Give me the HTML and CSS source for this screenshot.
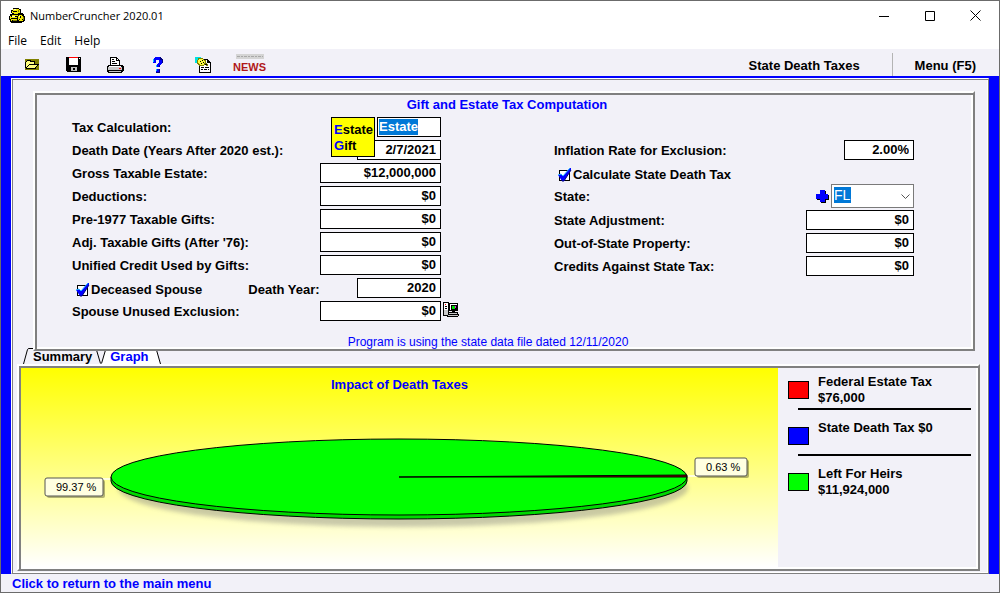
FILE: index.html
```html
<!DOCTYPE html>
<html lang="en">
<head>
	<meta charset="UTF-8">
	<title>NumberCruncher 2020.01</title>
	<link rel="stylesheet" href="styles.css">
</head>
<body>
	<div class="window">
		<header class="titlebar">
			<svg class="app-icon" width="17" height="16" viewBox="0 0 17 16" shape-rendering="crispEdges">
				<path d="M4 0h6v1h2v4h2v1h1v2h1v5h-1v1h-2v1H2v-1H1v-2H0V8h1V6h2V5H2V2h2z" fill="#000"/>
				<path d="M4 1h6v1h1v3H9v1H5V5H3V3h1zM3 7h6v1H2v1h6v1H2v1h6v1H3v1H2v-2H1V8h2zM10 7h3v1h1v5h-4v-1H9V8h1z" fill="#f0e800"/>
				<path d="M4 3h4v1H4zM11 8h1v2h-1zM10 11h1v1h-1zM13 11h1v1h-1z" fill="#000"/>
				<path d="M5 1h2v1H5zM3 8h3v1H3zM10 8h1v1h-1z" fill="#ffffc0"/>
				<path d="M9 2h1v2H9zM4 12h4v1H4zM14 9h1v3h-1z" fill="#808000"/>
			</svg>
			<h1>NumberCruncher 2020.01</h1>
			<div class="win-buttons">
				<button aria-label="Minimize"><svg width="10" height="11"><path d="M0 5.5h10" stroke="#000"/></svg></button>
				<button aria-label="Maximize"><svg width="11" height="11"><path d="M.5.5h9v9h-9z" fill="none" stroke="#000"/></svg></button>
				<button aria-label="Close"><svg width="12" height="12"><path d="M.5.5l10 10M10.500.5l-10 10" stroke="#000"/></svg></button>
			</div>
		</header>
		<nav class="menubar">
			<a href="#">File</a>
			<a href="#">Edit</a>
			<a href="#">Help</a>
		</nav>

		<div class="toolbar">
			<button aria-label="Open">
				<svg width="14" height="11" viewBox="0 0 14 11" shape-rendering="crispEdges">
					<path d="M0 0h14v11H0z" fill="#808000"/>
					<path d="M1 2h1V1h4v1h4v3h4v1h-1v1h-1v1h-1v2H1v-1H0V3h1z" fill="#000"/>
					<path d="M2 2h3v1h4v2H4v1H3v1H2v1H1V3h1zM4 6h8v1h-1v1h-1v1H2V8h1V7h1z" fill="#ffff80"/>
				</svg>
			</button>
			<button aria-label="Save">
				<svg width="16" height="15" viewBox="0 0 16 15" shape-rendering="crispEdges">
					<path d="M0 0h15v15H1v-1H0z" fill="#000"/>
					<path d="M3 1h9v7H3z" fill="#fff"/>
					<path d="M3 0h9v1H3z" fill="#f00"/>
					<path d="M13 1h1v1h-1z" fill="#fff"/>
					<path d="M5 10h6v4H5z" fill="#c0c0c0"/>
					<path d="M7 11h2v2H7z" fill="#000"/>
				</svg>
			</button>
			<button aria-label="Print">
				<svg width="18" height="16" viewBox="0 0 18 16" shape-rendering="crispEdges">
					<path d="M3 0h7v1h1v1h1v1h1v5h3v1h1v5h-1v1h-1v1H1v-1H0V9h1V8h2z" fill="#000"/>
					<path d="M4 1h5v3h3v4H4zM2 9h12v1H2z" fill="#fff"/>
					<path d="M1 10h14v3H1zM2 14h12v1H2z" fill="#c8c8c8"/>
					<path d="M5 2h2v1H5zM5 4h3v1H5zM5 6h5v1H5z" fill="#000"/>
					<path d="M10 2h1v1h-1z" fill="#fff"/>
					<path d="M12 11h2v1h-2z" fill="#f00"/>
				</svg>
			</button>
			<button aria-label="Help">
				<svg width="12" height="16" viewBox="0 0 12 16" shape-rendering="crispEdges">
					<path d="M2 1h1V0h5v1h2v1h1v4h-1v1H9v1H8v2H4V8h1V7h1V6h1V3H4v3H1V2h1zM4 12h4v4H4z" fill="#00f"/>
					<path d="M8 0h1v1h1v1h1v4h-1V3H8zM7 8h1v2H7zM7 12h1v4H4v-1h3z" fill="#000080"/>
					<path d="M1 2h1v3H1zM4 8h1v2H4zM4 12h1v2H4z" fill="#00c0ff"/>
				</svg>
			</button>
			<button class="wide" aria-label="Find">
				<svg width="16" height="16" viewBox="0 0 16 16" shape-rendering="crispEdges">
					<path d="M4 2h9v1h1v1h1v1h1v11H4z" fill="#000"/>
					<path d="M5 3h7v3h3v9H5z" fill="#fff"/>
					<path d="M0 0h6v2H4v1H3v2H2v1H0z" fill="#00e0e0"/>
					<path d="M3 1h5v1h1v1h2v3h1v1h1v2h-2V8H9v1H4V8H3V7H2V3h1z" fill="#808000"/>
					<path d="M3 3h1V2h4v1h1v1h1v2H9v2H5V7H4V6H3z" fill="#ffff40"/>
					<path d="M5 4h1v1H5zM7 3h1v1H7zM6 6h1v1H6zM8 5h1v1H8zM10 7h2v1h-2zM6 10h3v1H6zM10 10h4v1h-4zM6 12h2v1H6zM9 12h3v1H9zM13 12h1v1h-1z" fill="#000"/>
				</svg>
			</button>
			<button class="wide news" aria-label="News">
				<svg width="28" height="5" viewBox="0 0 28 5" shape-rendering="crispEdges">
					<path d="M0 0h28v5H0z" fill="#d4d4d4"/>
					<path d="M1 2.500h26" stroke="#a8a8a8" stroke-dasharray="3 1 2 1"/>
				</svg>
				<span>NEWS</span>
			</button>
			<button class="text-btn state-btn">State Death Taxes</button>
			<button class="text-btn menu-btn">Menu (F5)</button>
		</div>

		<main class="workspace">
			<div class="panel">
				<form class="frame tax-form">
					<h2>Gift and Estate Tax Computation</h2>
					<div class="columns">
						<div class="col-left">
							<div class="row">
								<label for="calc">Tax Calculation:</label>
								<input id="calc" class="field calc" value="Estate">
								<div class="popup">
									<div><b>E</b>state</div>
									<div><b>G</b>ift</div>
								</div>
							</div>
							<div class="row">
								<label for="ddate">Death Date (Years After 2020 est.):</label>
								<input id="ddate" class="field short" value="2/7/2021">
							</div>
							<div class="row">
								<label for="gross">Gross Taxable Estate:</label>
								<input id="gross" class="field" value="$12,000,000">
							</div>
							<div class="row">
								<label for="deduct">Deductions:</label>
								<input id="deduct" class="field" value="$0">
							</div>
							<div class="row">
								<label for="pre77">Pre-1977 Taxable Gifts:</label>
								<input id="pre77" class="field" value="$0">
							</div>
							<div class="row">
								<label for="adj">Adj. Taxable Gifts (After '76):</label>
								<input id="adj" class="field" value="$0">
							</div>
							<div class="row">
								<label for="unified">Unified Credit Used by Gifts:</label>
								<input id="unified" class="field" value="$0">
							</div>
							<div class="row">
								<label class="check">
									<span class="box"><input type="checkbox" checked>
										<svg width="15" height="14" viewBox="0 0 15 14"><path d="M1 7l3-1 2 2 7-8h1v2L7 13H5z" fill="#00f"/><path d="M14 2L7 13H5" stroke="#000080" fill="none"/><path d="M1 7l3-1 2 2 7-8" stroke="#20b0ff" fill="none"/></svg>
									</span>Deceased Spouse
								</label>
								<label class="year" for="dyear">Death Year:</label>
								<input id="dyear" class="field short" value="2020">
							</div>
							<div class="row">
								<label for="unused">Spouse Unused Exclusion:</label>
								<input id="unused" class="field" value="$0">
								<button type="button" class="calc-btn" aria-label="Calculate exclusion">
									<svg width="17" height="16" viewBox="0 0 17 16" shape-rendering="crispEdges">
										<path d="M0 0h6v14H0zM6 1h9v8H6zM9 9h3v1H9zM5 10h10v2h1v2h-1v1H4v-3h1z" fill="#000"/>
										<path d="M1 1h4v12H1zM7 2h7v1H7zM7 2h1v6H7z" fill="#fff"/>
										<path d="M1 8h4v5H1zM6 11h8v1H6zM5 13h10v1H5z" fill="#c8c8c8"/>
										<path d="M2 4h2v1H2zM2 6h2v1H2z" fill="#000"/>
										<path d="M2 2h1v1H2z" fill="#f00"/>
										<path d="M9 4h3v3H9z" fill="#00e000"/>
										<path d="M12 4h1v2h-1z" fill="#f0f"/>
									</svg>
								</button>
							</div>
						</div>
						<div class="col-right">
							<div class="row">
								<label for="infl">Inflation Rate for Exclusion:</label>
								<input id="infl" class="field rate" value="2.00%">
							</div>
							<div class="row">
								<label class="check">
									<span class="box"><input type="checkbox" checked>
										<svg width="15" height="14" viewBox="0 0 15 14"><path d="M1 7l3-1 2 2 7-8h1v2L7 13H5z" fill="#00f"/><path d="M14 2L7 13H5" stroke="#000080" fill="none"/><path d="M1 7l3-1 2 2 7-8" stroke="#20b0ff" fill="none"/></svg>
									</span>Calculate State Death Tax
								</label>
							</div>
							<div class="row state-row">
								<label for="state">State:</label>
								<button type="button" class="plus" aria-label="Add state">
									<svg width="13" height="13" viewBox="0 0 13 13" shape-rendering="crispEdges">
										<path d="M5 1h5v4h3v5h-3v3H5v-3H1V5h4z" fill="#000"/>
										<path d="M4 0h5v4h3v5H9v3H4V9H0V4h4z" fill="#00f"/>
									</svg>
								</button>
								<span class="select">
									<select id="state"><option>FL</option></select>
									<svg width="9" height="6" viewBox="0 0 9 6"><path d="M.5.5l4 4 4-4" fill="none" stroke="#555"/></svg>
								</span>
							</div>
							<div class="row">
								<label for="sadj">State Adjustment:</label>
								<input id="sadj" class="field mid" value="$0">
							</div>
							<div class="row">
								<label for="oos">Out-of-State Property:</label>
								<input id="oos" class="field mid" value="$0">
							</div>
							<div class="row">
								<label for="credits">Credits Against State Tax:</label>
								<input id="credits" class="field mid" value="$0">
							</div>
						</div>
					</div>
					<p class="note">Program is using the state data file dated 12/11/2020</p>
				</form>

				<div class="tabs">
					<svg width="10" height="16"><path d="M.5 16L4.500 1.500Q5 .5 6 .5h4" fill="none" stroke="#000"/></svg>
					<button>Summary</button>
					<svg width="10" height="16"><path d="M5 16l5-14v14z" fill="#fff"/><path d="M.5 2L4.500 15.500M9.500 2L5.500 15.500" fill="none" stroke="#000"/></svg>
					<button class="active">Graph</button>
					<svg width="8" height="16"><path d="M0 0h3l4 16H0z" fill="#fff"/><path d="M3.500 2L7.500 16" stroke="#000"/></svg>
				</div>

				<section class="frame graph">
					<div class="chart">
						<h2>Impact of Death Taxes</h2>
						<svg class="pie" viewBox="0 0 757 120">
							<defs>
								<filter id="soft" x="-5%" y="-20%" width="110%" height="150%"><feGaussianBlur stdDeviation="2"/></filter>
							</defs>
							<ellipse cx="382" cy="63" rx="285" ry="39" fill="#888" opacity=".45" filter="url(#soft)"/>
							<path d="M78 54h14M666 51h14" stroke="#fff" stroke-width="2" opacity=".7"/>
							<path d="M90 52v4a288 38 0 0 0 576 0v-4z" fill="#00d800" stroke="#000"/>
							<ellipse cx="378" cy="52" rx="288" ry="38" fill="#0f0" stroke="#000"/>
							<path d="M378 52l288-2v2z" fill="#800000" stroke="#000"/>
							<g class="callout">
								<rect x="26" y="55" width="58" height="18" rx="2" fill="#000" opacity=".3"/>
								<rect x="24" y="53" width="58" height="18" rx="2" fill="#ffffe1" stroke="#555"/>
								<text x="35" y="66">99.37 %</text>
								<rect x="676" y="35" width="52" height="18" rx="2" fill="#000" opacity=".3"/>
								<rect x="674" y="33" width="52" height="18" rx="2" fill="#ffffe1" stroke="#555"/>
								<text x="685" y="46">0.63 %</text>
							</g>
						</svg>
					</div>
					<ul class="legend">
						<li><i class="swatch red"></i><span>Federal Estate Tax<br>$76,000</span></li>
						<li><i class="swatch blue"></i><span>State Death Tax $0</span></li>
						<li><i class="swatch green"></i><span>Left For Heirs<br>$11,924,000</span></li>
					</ul>
				</section>
			</div>
		</main>

		<footer class="status">Click to return to the main menu</footer>
	</div>
</body>
</html>
```

FILE: styles.css
```css
:root{
	--face:#f2f1f8;
	--gray:#808080;
	--blue:#0000ff;
	--sel:#0078d7;
}
*{
	box-sizing:border-box;
}
body{
	margin:0;
	font:bold 13px/16px "Liberation Sans",Arial,sans-serif;
	color:#000;
}
h1,h2,p,ul{
	margin:0;
	padding:0;
}
svg{
	display:block;
}
button{
	padding:0;
	border:0;
	background:none;
	font:inherit;
	color:inherit;
}
.window{
	display:flex;
	flex-direction:column;
	min-height:100vh;
	border:1px solid #6b6b6b;
	background:var(--face);
}

/* title and menu */
.titlebar{
	display:flex;
	align-items:center;
	height:30px;
	padding-left:8px;
	background:#fff;
}
.titlebar h1{
	margin-left:4px;
	font:11px/16px "Open Sans","Noto Sans",sans-serif;
}
.win-buttons{
	display:flex;
	margin-left:auto;
}
.win-buttons button{
	display:flex;
	align-items:center;
	justify-content:center;
	width:46px;
	height:30px;
}
.menubar{
	display:flex;
	gap:13px;
	height:18px;
	padding:0 7px;
	background:#fff;
	font:12px/20px "Open Sans","Noto Sans",sans-serif;
}
.menubar a{
	color:#000;
	text-decoration:none;
}

.toolbar{
	display:flex;
	align-items:stretch;
	height:27px;
	padding-left:10px;
}
.toolbar button{
	display:flex;
	align-items:center;
	justify-content:center;
	width:42px;
	padding-top:4px;
}
.toolbar .wide{
	width:47px;
}
.toolbar .news{
	flex-direction:column;
	padding-top:3px;
	font:bold 11px/16px "Liberation Sans Narrow","Liberation Sans",sans-serif;
	color:#b01818;
}
.toolbar .text-btn{
	width:auto;
	padding:6px 20px 0 22px;
}
.toolbar .state-btn{
	margin-left:auto;
	padding-right:32px;
}
.toolbar .menu-btn{
	margin-top:4px;
	padding-top:2px;
	padding-right:23px;
	border-left:1px solid #b4b4b4;
}

/* blue workspace */
.workspace{
	display:flex;
	flex:1;
	padding:2px 10px 0;
	background:var(--blue);
}
.panel{
	display:flex;
	flex:1;
	flex-direction:column;
	padding:11px 8px 2px 5px;
	border:1px solid;
	border-color:#fff var(--gray) var(--gray) #fff;
	box-shadow:inset 1px 1px 0 var(--gray),inset -1px -1px 0 #fff;
	background:var(--face);
}
.frame{
	border:2px solid;
	border-color:#fff var(--gray) var(--gray) #fff;
	box-shadow:inset 2px 2px 0 var(--gray),inset -2px -2px 0 #fff;
	background:var(--face);
}
h2{
	font-size:13px;
	line-height:16px;
	text-align:center;
	color:var(--blue);
}

.tax-form{
	position:relative;
	z-index:1;
	height:260px;
	margin:1px 5px 0 16px;
	padding:4px 37px 2px;
}
.tax-form h2{
	padding-left:6px;
}
.columns{
	display:flex;
	justify-content:space-between;
	margin:4px 22px 0 0;
}
.col-left{
	width:369px;
}
.col-right{
	width:360px;
	margin-top:23px;
}
.row{
	position:relative;
	display:flex;
	align-items:center;
	height:20px;
	margin-bottom:3px;
}
.row label{
	padding-top:2px;
}
.field{
	width:121px;
	height:20px;
	margin-left:auto;
	padding:0 4px 2px;
	border:1px solid #000;
	background:#fff;
	font:inherit;
	text-align:right;
	color:#000;
}
.field.short{
	width:84px;
}
.field.mid{
	width:108px;
}
.field.rate{
	width:70px;
}
.field.calc{
	width:64px;
	padding-left:1px;
	background:linear-gradient(var(--sel),var(--sel)) 1px 1px/39px 16px no-repeat #fff;
	text-align:left;
	color:#fff;
}
/* choices opened over the first two rows */
.popup{
	position:absolute;
	z-index:2;
	top:0;
	right:66px;
	width:44px;
	height:40px;
	padding:4px 2px;
	border:1px solid #000;
	background:#ff0;
}
.popup b{
	color:var(--blue);
}
.row .check{
	display:flex;
	align-items:center;
	padding:4px 0 0 3px;
}
.box{
	position:relative;
	width:16px;
	height:14px;
}
.box input{
	appearance:none;
	display:block;
	width:11px;
	height:11px;
	margin:2px 0 0 2px;
	border:1px solid #000;
	background:#fff;
}
.box svg{
	position:absolute;
	top:0;
	left:0;
	pointer-events:none;
}
.row .year{
	margin-left:46px;
	padding-top:4px;
}
.calc-btn{
	position:absolute;
	top:1px;
	left:371px;
}
.state-row{
	height:24px;
	margin:-2px 0 2px;
}
.plus{
	margin:0 2px 0 auto;
}
.select{
	position:relative;
}
.select svg{
	position:absolute;
	top:10px;
	right:4px;
	pointer-events:none;
}
select{
	appearance:none;
	display:block;
	width:83px;
	height:24px;
	padding:0 2px 2px;
	border:1px solid #7a7a7a;
	border-radius:0;
	background:linear-gradient(var(--sel),var(--sel)) 2px 2px/17px 16px no-repeat #fff;
	font:14px/16px "Liberation Sans",Arial,sans-serif;
	color:#fff;
}
.note{
	margin-top:10px;
	padding-right:32px;
	font-weight:normal;
	font-size:12px;
	text-align:center;
	color:var(--blue);
}

.tabs{
	display:flex;
	height:16px;
	margin:-3px 0 0 6px;
}
.tabs button{
	height:16px;
	padding:1px 4px 0 0;
}
.tabs .active{
	padding:1px 4px 0;
	background:#fff;
	color:var(--blue);
}

.graph{
	display:flex;
	flex:1;
	padding:2px;
}
.chart{
	flex:1;
	padding-top:9px;
	background:linear-gradient(#ff0,#fff);
}
.pie{
	width:100%;
	margin-top:32px;
}
.callout text{
	font:11px "Liberation Sans",Arial,sans-serif;
}
.legend{
	width:198px;
	padding:6px 5px 0 10px;
	list-style:none;
}
.legend li{
	position:relative;
	display:flex;
	gap:9px;
	height:46px;
	line-height:16px;
}
.legend li:not(:last-child)::after{
	content:'';
	position:absolute;
	right:0;
	bottom:10px;
	width:173px;
	height:2px;
	background:#000;
}
.swatch{
	width:21px;
	height:18px;
	margin-top:7px;
	border:1px solid #000;
}
.red{
	background:#f00;
}
.blue{
	background:#00f;
}
.green{
	background:#0f0;
}

.status{
	height:18px;
	padding:2px 11px 0;
	color:var(--blue);
}
```
